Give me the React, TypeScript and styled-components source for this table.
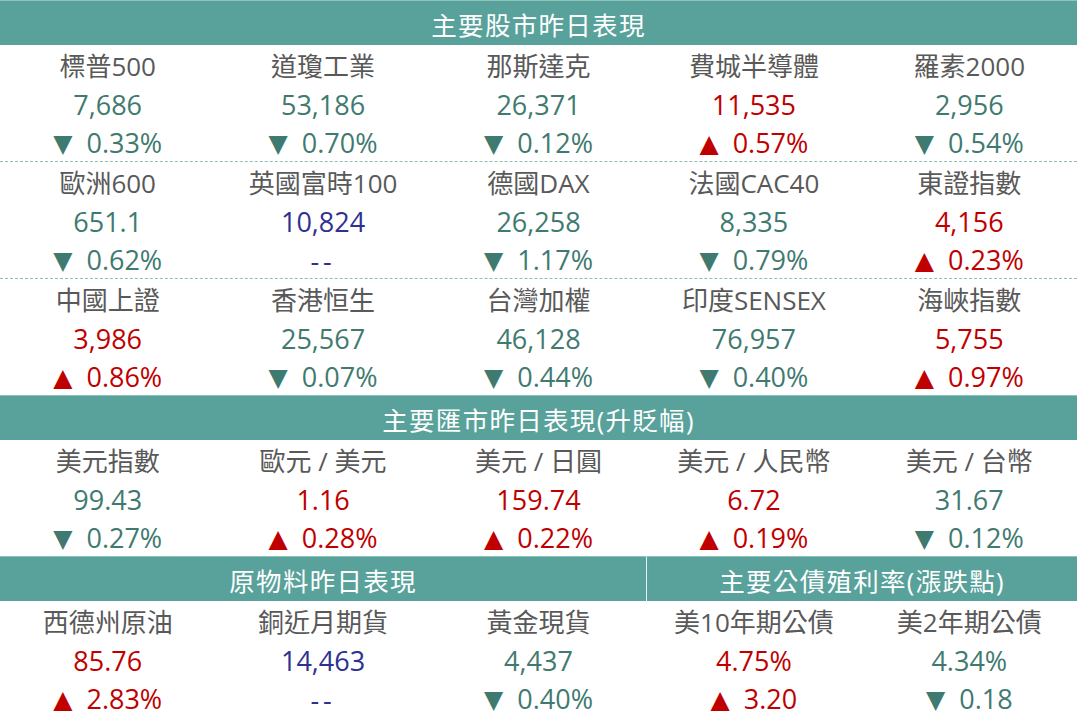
import React from 'react';
import styled, { createGlobalStyle } from 'styled-components';

const GlobalStyle = createGlobalStyle`
  html, body {
    margin: 0;
    padding: 0;
    background: #ffffff;
  }
  body {
    font-family: "Open Sans", "Noto Sans CJK TC", sans-serif;
  }
`;

type Tone = 'up' | 'down' | 'flat';

type Item = {
  name: string;
  value: string;
  change: string;
  tone: Tone;
};

const toneColor = (tone: Tone) =>
  tone === 'up' ? '#c00000' : tone === 'down' ? '#3f7a70' : '#2e3192';

const Board = styled.div`
  width: 1077px;
  height: 718px;
  display: flex;
  flex-direction: column;
  overflow: hidden;
`;

const Grid = styled.div`
  display: grid;
  grid-template-columns: repeat(5, 1fr);
`;

const Header = styled.div<{ span?: number; divider?: boolean }>`
  grid-column: span ${p => p.span || 5};
  height: 44px;
  border-top: 1px solid #8cc3bd;
  background: #58a29b;
  color: #ffffff;
  font-size: 25.5px;
  letter-spacing: 1.3px;
  display: flex;
  align-items: center;
  justify-content: center;
  border-left: ${p => (p.divider ? '1px solid #e6f2f0' : 'none')};
`;

const Group = styled.div<{ dashed?: boolean }>`
  grid-column: span 5;
  display: grid;
  grid-template-columns: repeat(5, 1fr);
  height: 116px;
  border-bottom: ${p => (p.dashed ? '1px dashed #8fbcb6' : 'none')};
`;

const Cell = styled.div`
  display: grid;
  grid-template-rows: 40px 38px 38px;
  align-items: center;
  justify-items: center;
  font-size: 26px;
`;

const Name = styled.div`
  color: #595959;
  line-height: 1;
  padding-top: 1px;
`;

const Value = styled.div<{ tone: Tone }>`
  color: ${p => toneColor(p.tone)};
  font-size: 27px;
  line-height: 1;
  padding-top: 1px;
`;

const Change = styled.div<{ tone: Tone }>`
  color: ${p => toneColor(p.tone)};
  font-size: 27px;
  line-height: 1;
  padding-top: 2px;
  white-space: pre;
  letter-spacing: ${p => (p.tone === 'flat' ? '4px' : '0')};
`;

const Arrow = styled.span`
  font-family: "DejaVu Sans", sans-serif;
  font-size: 25px;
  position: relative;
  top: -1px;
`;

const stocks: Item[][] = [
  [
    { name: '標普500', value: '7,686', change: '0.33%', tone: 'down' },
    { name: '道瓊工業', value: '53,186', change: '0.70%', tone: 'down' },
    { name: '那斯達克', value: '26,371', change: '0.12%', tone: 'down' },
    { name: '費城半導體', value: '11,535', change: '0.57%', tone: 'up' },
    { name: '羅素2000', value: '2,956', change: '0.54%', tone: 'down' },
  ],
  [
    { name: '歐洲600', value: '651.1', change: '0.62%', tone: 'down' },
    { name: '英國富時100', value: '10,824', change: '--', tone: 'flat' },
    { name: '德國DAX', value: '26,258', change: '1.17%', tone: 'down' },
    { name: '法國CAC40', value: '8,335', change: '0.79%', tone: 'down' },
    { name: '東證指數', value: '4,156', change: '0.23%', tone: 'up' },
  ],
  [
    { name: '中國上證', value: '3,986', change: '0.86%', tone: 'up' },
    { name: '香港恒生', value: '25,567', change: '0.07%', tone: 'down' },
    { name: '台灣加權', value: '46,128', change: '0.44%', tone: 'down' },
    { name: '印度SENSEX', value: '76,957', change: '0.40%', tone: 'down' },
    { name: '海峽指數', value: '5,755', change: '0.97%', tone: 'up' },
  ],
];

const forex: Item[] = [
  { name: '美元指數', value: '99.43', change: '0.27%', tone: 'down' },
  { name: '歐元 / 美元', value: '1.16', change: '0.28%', tone: 'up' },
  { name: '美元 / 日圓', value: '159.74', change: '0.22%', tone: 'up' },
  { name: '美元 / 人民幣', value: '6.72', change: '0.19%', tone: 'up' },
  { name: '美元 / 台幣', value: '31.67', change: '0.12%', tone: 'down' },
];

const commodities: Item[] = [
  { name: '西德州原油', value: '85.76', change: '2.83%', tone: 'up' },
  { name: '銅近月期貨', value: '14,463', change: '--', tone: 'flat' },
  { name: '黃金現貨', value: '4,437', change: '0.40%', tone: 'down' },
  { name: '美10年期公債', value: '4.75%', change: '3.20', tone: 'up' },
  { name: '美2年期公債', value: '4.34%', change: '0.18', tone: 'down' },
];

// value colour follows the change, except when there is no change
const QuoteCell: React.FC<{ item: Item }> = ({ item }) => (
  <Cell>
    <Name>{item.name}</Name>
    <Value tone={item.tone}>{item.value}</Value>
    <Change tone={item.tone}>
      {item.tone === 'flat' ? (
        item.change
      ) : (
        <>
          <Arrow>{item.tone === 'up' ? '▲' : '▼'}</Arrow>
          {'  ' + item.change}
        </>
      )}
    </Change>
  </Cell>
);

const App: React.FC = () => (
  <Board>
    <GlobalStyle />
    <Grid>
      <Header>主要股市昨日表現</Header>
      {stocks.map((row, i) => (
        <Group key={i} dashed={i < stocks.length - 1}>
          {row.map(item => (
            <QuoteCell key={item.name} item={item} />
          ))}
        </Group>
      ))}
      <Header>主要匯市昨日表現(升貶幅)</Header>
      <Group>
        {forex.map(item => (
          <QuoteCell key={item.name} item={item} />
        ))}
      </Group>
      <Header span={3}>原物料昨日表現</Header>
      <Header span={2} divider>
        主要公債殖利率(漲跌點)
      </Header>
      <Group>
        {commodities.map(item => (
          <QuoteCell key={item.name} item={item} />
        ))}
      </Group>
    </Grid>
  </Board>
);

export default App;
